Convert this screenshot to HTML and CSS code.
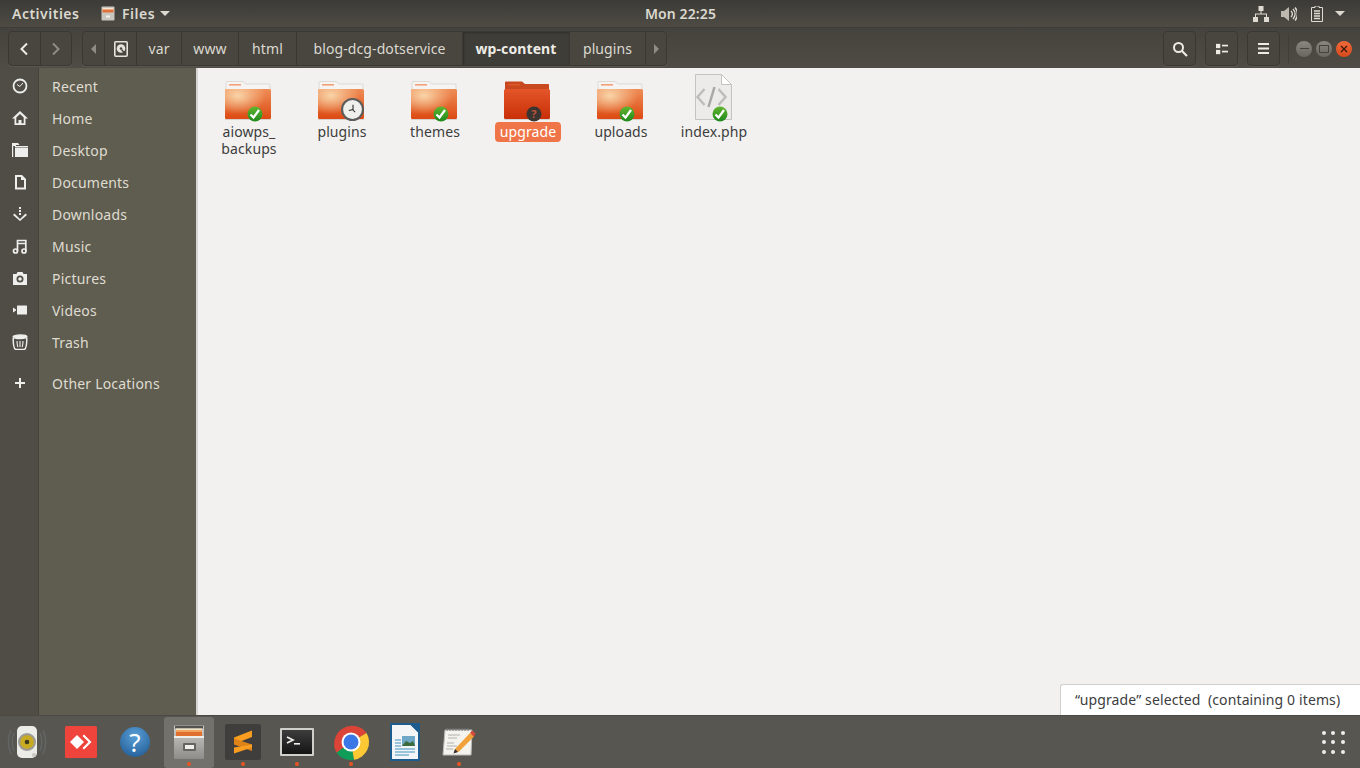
FILE: index.html
```html
<!DOCTYPE html>
<html lang="en">
<head>
<meta charset="utf-8">
<title>Files</title>
<link rel="stylesheet" href="styles.css">
</head>
<body>
<svg class="defs" aria-hidden="true">
  <defs>
    <linearGradient id="fbody" x1="0" y1="0" x2="0" y2="1"><stop offset="0" stop-color="#ef8d57"/><stop offset="1" stop-color="#dc4a12"/></linearGradient>
    <radialGradient id="fglow" cx=".28" cy=".22" r=".62"><stop offset="0" stop-color="#fad9ae" stop-opacity=".95"/><stop offset="1" stop-color="#f9d3a4" stop-opacity="0"/></radialGradient>
    <linearGradient id="fred" x1="0" y1="0" x2="0" y2="1"><stop offset="0" stop-color="#e4562a"/><stop offset="1" stop-color="#c92f08"/></linearGradient>
    <linearGradient id="green" x1="0" y1="0" x2="0" y2="1"><stop offset="0" stop-color="#63b52f"/><stop offset="1" stop-color="#1e8a1e"/></linearGradient>
    <linearGradient id="cab" x1="0" y1="0" x2="0" y2="1"><stop offset="0" stop-color="#d2d0cc"/><stop offset="1" stop-color="#8e8c88"/></linearGradient>
    <linearGradient id="term" x1="0" y1="0" x2="0" y2="1"><stop offset="0" stop-color="#3d3d3d"/><stop offset="1" stop-color="#141414"/></linearGradient>
    <radialGradient id="help" cx=".5" cy=".3" r=".8"><stop offset="0" stop-color="#5b9fd6"/><stop offset="1" stop-color="#1f5a94"/></radialGradient>
    <symbol id="folder" viewBox="0 0 48 48">
      <path d="M2 8.500a1 1 0 0 1 1-1h16l3 2.500h23a1 1 0 0 1 1 1v6H2z" fill="#f6f4f2" stroke="#cfcac5" stroke-width=".6"/>
      <rect x="5" y="10" width="12" height="1.600" fill="#f0a176"/>
      <rect x="1" y="15" width="46" height="30" rx="1.500" fill="url(#fbody)"/>
      <rect x="1" y="15" width="46" height="30" rx="1.500" fill="url(#fglow)"/>
      <rect x="1" y="45" width="46" height="1" fill="#000" opacity=".12"/>
    </symbol>
    <symbol id="check" viewBox="0 0 16 16">
      <circle cx="8" cy="8" r="7.500" fill="url(#green)"/>
      <path d="M3.500 8.500l3 3 5.500-7.500" fill="none" stroke="#fff" stroke-width="2.200"/>
    </symbol>
  </defs>
</svg>

<header class="topbar">
  <span class="top-activities">Activities</span>
  <div class="top-app">
    <svg class="top-files" viewBox="0 0 14 15"><rect x=".5" y=".5" width="13" height="14" rx="1" fill="#c9c6c0"/><rect x="1.500" y="2" width="11" height="4.500" fill="#e2703a"/><rect x="1.500" y="2" width="11" height="1.500" fill="#f5e6d0"/><rect x="5" y="9.500" width="4" height="2" fill="#f4f2ee"/></svg>
    <span>Files</span>
    <i class="caret"></i>
  </div>
  <time class="top-clock">Mon 22:25</time>
  <div class="top-tray">
    <svg class="tray-net" viewBox="0 0 16 16" fill="#dfdbd2"><rect x="5.500" y="0" width="5" height="5"/><rect x="0" y="11" width="5" height="5"/><rect x="11" y="11" width="5" height="5"/><path d="M7.500 5h1v2.500h5.500v3.500h-1V8.500H3V11H2V7.500h5.500z"/></svg>
    <svg class="tray-sound" viewBox="0 0 16 16" fill="none" stroke="#dfdbd2"><path d="M0 5h3l5-4v14l-5-4H0z" fill="#bdb9b0" stroke="none"/><path d="M10 5a4 4 0 0 1 0 6M12 3a7 7 0 0 1 0 10M14 1.500a10 10 0 0 1 0 13" stroke-width="1.300"/></svg>
    <svg class="tray-batt" viewBox="0 0 12 16"><path d="M4 0h4v1.500h3.500v14H.5v-14H4z" fill="none" stroke="#dfdbd2"/><path d="M3 5h6M3 7.500h6M3 10h6M3 12.500h6" stroke="#dfdbd2" stroke-width="1.300"/></svg>
    <i class="caret"></i>
  </div>
</header>

<nav class="headerbar">
  <div class="btn-group nav-group">
    <button class="hb-btn nav-btn"><svg viewBox="0 0 10 14" class="chev"><path d="M8 1.500L2.500 7 8 12.500" fill="none" stroke="#ecebe6" stroke-width="2"/></svg></button>
    <button class="hb-btn nav-btn"><svg viewBox="0 0 10 14" class="chev"><path d="M2 1.500L7.500 7 2 12.500" fill="none" stroke="#8f8c84" stroke-width="2"/></svg></button>
  </div>
  <div class="btn-group path-group">
    <button class="seg seg-a"><i class="tri tri-left"></i></button>
    <button class="seg seg-b"><svg viewBox="0 0 14 16" class="disk"><rect x=".8" y=".8" width="12.400" height="14.400" rx="1" fill="none" stroke="#e4e2dc" stroke-width="1.600"/><circle cx="7" cy="7.500" r="4.300" fill="#e4e2dc"/><circle cx="7" cy="7.500" r="1.200" fill="#47453f"/><path d="M7.500 8.500l3 3.500" stroke="#47453f" stroke-width="1.400"/></svg></button>
    <button class="seg seg-c">var</button>
    <button class="seg seg-d">www</button>
    <button class="seg seg-e">html</button>
    <button class="seg seg-f">blog-dcg-dotservice</button>
    <button class="seg seg-g seg-active">wp-content</button>
    <button class="seg seg-h">plugins</button>
    <button class="seg seg-i"><i class="tri tri-right"></i></button>
  </div>
  <div class="hb-right">
    <button class="hb-btn tool-btn"><svg viewBox="0 0 16 16" class="tool"><circle cx="6.500" cy="6.500" r="4.500" fill="none" stroke="#ecebe6" stroke-width="2"/><path d="M10 10l5 5" stroke="#ecebe6" stroke-width="2.200"/></svg></button>
    <button class="hb-btn tool-btn"><svg viewBox="0 0 14 12" class="tool-small" fill="#ecebe6"><rect x="0" y="0" width="5" height="5"/><rect x="0" y="7" width="5" height="5"/><rect x="7" y="1" width="7" height="2"/><rect x="7" y="8" width="7" height="2"/></svg></button>
    <button class="hb-btn tool-btn"><svg viewBox="0 0 12 12" class="tool-small" fill="#ecebe6"><rect y="0" width="11" height="2"/><rect y="4.500" width="11" height="2"/><rect y="9" width="11" height="2"/></svg></button>
    <span class="hb-sep"></span>
    <div class="wm">
      <span class="wm-btn"><i class="wm-min"></i></span>
      <span class="wm-btn"><i class="wm-max"></i></span>
      <span class="wm-btn wm-close"><svg viewBox="0 0 8 8" class="wm-x"><path d="M1 1l6 6M7 1l-6 6" stroke="#3b1a0c" stroke-width="1.300"/></svg></span>
    </div>
  </div>
</nav>

<main class="main">
  <aside class="sidebar">
    <div class="side-row"><span class="side-ic"><svg viewBox="0 0 16 16"><circle cx="8" cy="8" r="6.500" fill="none" stroke="#eeeeec" stroke-width="1.800"/><path d="M5 6.500l2.800 2L11 5" fill="none" stroke="#eeeeec"/></svg></span><span class="side-tx">Recent</span></div>
    <div class="side-row"><span class="side-ic"><svg viewBox="0 0 16 16" fill="#eeeeec"><path d="M8 1L0 8.500h2.500V15h11V8.500H16zM4.300 7.500L8 4l3.700 3.500v5.800H9.500V10h-3v3.300H4.300z" fill-rule="evenodd"/></svg></span><span class="side-tx">Home</span></div>
    <div class="side-row"><span class="side-ic"><svg viewBox="0 0 16 16" fill="#eeeeec"><path d="M0 1h6l1.500 2H4v1H1.200v11H0z"/><path d="M3 5.500h13V15H3zM3 4h13v1H3z"/></svg></span><span class="side-tx">Desktop</span></div>
    <div class="side-row"><span class="side-ic"><svg viewBox="0 0 16 16" fill="#eeeeec"><path d="M3 1h7l4 4v10.500H3zM5 3v10.500h7V6H9V3z" fill-rule="evenodd"/></svg></span><span class="side-tx">Documents</span></div>
    <div class="side-row"><span class="side-ic"><svg viewBox="0 0 16 16" fill="#eeeeec"><rect x="7" y="1" width="2" height="2"/><rect x="7" y="4" width="2" height="2"/><rect x="7" y="7" width="2" height="2"/><path d="M2.500 8.500L8 14l5.500-5.500L15 10l-7 6-7-6z" transform="translate(0 -1)"/></svg></span><span class="side-tx">Downloads</span></div>
    <div class="side-row"><span class="side-ic"><svg viewBox="0 0 16 16" fill="none" stroke="#eeeeec" stroke-width="1.700"><circle cx="3.500" cy="13" r="2"/><circle cx="12" cy="13" r="2"/><path d="M5.500 13V2.500h8.300V13M5.500 5.500h8.300"/></svg></span><span class="side-tx">Music</span></div>
    <div class="side-row"><span class="side-ic"><svg viewBox="0 0 16 16"><path d="M1 4h3.500l1-2h5l1 2H15v11H1z" fill="#eeeeec"/><circle cx="8" cy="9" r="3.500" fill="#4f4d46"/><circle cx="8" cy="9" r="1.800" fill="#eeeeec"/></svg></span><span class="side-tx">Pictures</span></div>
    <div class="side-row"><span class="side-ic"><svg viewBox="0 0 16 16" fill="#eeeeec"><rect x="5" y="3.500" width="10" height="9" rx=".5"/><path d="M1 5.500l3 2v1l-3 2z"/></svg></span><span class="side-tx">Videos</span></div>
    <div class="side-row"><span class="side-ic"><svg viewBox="0 0 16 16" fill="none" stroke="#eeeeec" stroke-width="1.300"><ellipse cx="8" cy="2.800" rx="7" ry="1.800" fill="#eeeeec"/><path d="M1.200 4c0 6 .3 11.500 2.800 11.500h8c2.500 0 2.800-5.500 2.800-11.500" stroke-width="1.500"/><path d="M5 7c0 2 .3 4 .8 6M8 7v6M11 7c0 2-.3 4-.8 6" stroke-width="1.100"/></svg></span><span class="side-tx">Trash</span></div>
    <div class="side-row side-other"><span class="side-ic"><svg viewBox="0 0 16 16" fill="#eeeeec"><rect x="7" y="3" width="2" height="10"/><rect x="3" y="7" width="10" height="2"/></svg></span><span class="side-tx">Other Locations</span></div>
  </aside>

  <section class="content">
    <div class="grid">
      <article class="item">
        <span class="thumb"><svg class="thumb-svg"><use href="#folder"/></svg><svg class="badge"><use href="#check"/></svg></span>
        <span class="label">aiowps_<br>backups</span>
      </article>
      <article class="item">
        <span class="thumb"><svg class="thumb-svg"><use href="#folder"/></svg>
          <svg class="badge badge-clock" viewBox="0 0 22 22"><circle cx="11" cy="11" r="10" fill="#efefec" stroke="#5c5c5c" stroke-width="2"/><path d="M11.500 6.500v4.500l-4 1" fill="none" stroke="#333" stroke-width="1.100"/><path d="M11 11l2.500 2.500" stroke="#333"/></svg></span>
        <span class="label">plugins</span>
      </article>
      <article class="item">
        <span class="thumb"><svg class="thumb-svg"><use href="#folder"/></svg><svg class="badge"><use href="#check"/></svg></span>
        <span class="label">themes</span>
      </article>
      <article class="item">
        <span class="thumb"><svg class="thumb-svg" viewBox="0 0 48 48"><path d="M2 8.500a1 1 0 0 1 1-1h16l3 2.500h23a1 1 0 0 1 1 1v6H2z" fill="#c8481f"/><rect x="5" y="10" width="12" height="1.600" fill="#e0572c"/><rect x="1" y="15" width="46" height="30" rx="1.500" fill="url(#fred)"/><rect x="1" y="45" width="46" height="1" fill="#000" opacity=".12"/></svg>
          <svg class="badge" viewBox="0 0 16 16"><circle cx="8" cy="8" r="7.500" fill="#3b3532"/><text x="8" y="12" class="badge-q">?</text></svg></span>
        <span class="label label-sel">upgrade</span>
      </article>
      <article class="item">
        <span class="thumb"><svg class="thumb-svg"><use href="#folder"/></svg><svg class="badge"><use href="#check"/></svg></span>
        <span class="label">uploads</span>
      </article>
      <article class="item">
        <span class="thumb"><svg class="thumb-svg" viewBox="0 0 48 48"><path d="M6.500 .5h26l10 10v35h-36z" fill="#ecebe9" stroke="#c4c3c0"/><path d="M32.500 .5v10h10z" fill="#fff" stroke="#c4c3c0"/><path d="M15.500 15l-7 8 7 8M29.500 15l7 8-7 8" fill="none" stroke="#bebdba" stroke-width="2.500"/><path d="M25.500 13l-6 20" stroke="#a9a8a5" stroke-width="2.500"/></svg><svg class="badge"><use href="#check"/></svg></span>
        <span class="label">index.php</span>
      </article>
    </div>
    <div class="status">“upgrade” selected&nbsp; (containing 0 items)</div>
  </section>
</main>

<footer class="dock">
  <div class="slot">
    <svg class="app app-speaker" viewBox="0 0 36 40"><path d="M5 11a24 24 0 0 0 0 18M2 8a30 30 0 0 0 0 24M31 11a24 24 0 0 1 0 18M34 8a30 30 0 0 1 0 24" stroke="#7d8b99" stroke-width="1.500" fill="none" opacity=".3"/><rect x="8" y="4" width="20" height="32" rx="5" fill="#ecece8"/><circle cx="18" cy="20" r="9" fill="#9c9a92"/><circle cx="18" cy="20" r="6.800" fill="#c9ab22"/><circle cx="18" cy="20" r="2.300" fill="#3d3a20"/><circle cx="25" cy="33" r="2" fill="#c8c8c4"/></svg>
  </div>
  <div class="slot">
    <svg class="app app-any" viewBox="0 0 32 32"><rect width="32" height="32" rx="1.500" fill="#ef443b"/><path d="M5 16l7-7 7 7-7 7z" fill="#fff"/><path d="M19 8.500l7.500 7.500-7.500 7.500-1.500-1.500 6-6-6-6z" fill="#fff"/></svg>
  </div>
  <div class="slot">
    <svg class="app app-help" viewBox="0 0 30 30"><circle cx="15" cy="15" r="15" fill="url(#help)"/><text x="15" y="25" class="help-q">?</text></svg>
  </div>
  <div class="slot slot-active">
    <svg class="app app-cab" viewBox="0 0 32 36"><rect x="1" y="1" width="30" height="34" rx="1.500" fill="url(#cab)"/><rect x="2" y="1.500" width="28" height="3" fill="#55534f"/><rect x="3" y="4.500" width="26" height="1.500" fill="#f5e3c8"/><rect x="3" y="6" width="26" height="2" fill="#f0a45e"/><rect x="3" y="8" width="26" height="4" fill="#e0702f"/><rect x="1" y="12" width="30" height="2" fill="#eeedea"/><rect x="10" y="19" width="13" height="8" rx="1" fill="#66645f"/><rect x="12" y="21" width="9" height="4" fill="#f0efed"/></svg>
    <i class="run-dot"></i>
  </div>
  <div class="slot">
    <svg class="app app-sub" viewBox="0 0 36 36"><rect width="36" height="36" rx="2" fill="#3f3e3c"/><path d="M9 13.500L27 6.500V13L9 20z" fill="#f89d1f"/><path d="M9 14.500L27 20.500V27L9 20.500z" fill="#dd8318"/><path d="M27 20.500V23.500L9 29.500V23.500z" fill="#f89d1f"/></svg>
    <i class="run-dot"></i>
  </div>
  <div class="slot">
    <svg class="app app-term" viewBox="0 0 34 28"><rect width="34" height="28" rx="1" fill="#cfcfcb"/><rect x="2" y="2" width="30" height="24" fill="url(#term)"/><path d="M7 9l6 3-6 3" fill="none" stroke="#f1f1ee" stroke-width="1.700"/><rect x="14" y="15" width="6" height="1.600" fill="#f1f1ee"/></svg>
    <i class="run-dot"></i>
  </div>
  <div class="slot">
    <svg class="app app-chrome" viewBox="0 0 36 36"><path d="M18 18L33.600 9A18 18 0 0 0 3.600 28.800z" fill="#db4437"/><path d="M18 18L3.600 28.800A18 18 0 0 0 21 35.800z" fill="#0f9d58"/><path d="M18 18L21 35.800A18 18 0 0 0 33.600 9z" fill="#fcc934"/><circle cx="18" cy="18" r="9.500" fill="#fff"/><circle cx="18" cy="18" r="7.500" fill="#3b78e7"/></svg>
    <i class="run-dot"></i>
  </div>
  <div class="slot">
    <svg class="app app-writer" viewBox="0 0 30 38"><path d="M1 1h20l8 8v28H1z" fill="#f3f5f6" stroke="#1c5c8e" stroke-width="2"/><path d="M19 0h11v11z" fill="#1c5c8e"/><rect x="12" y="13" width="13" height="10" fill="#6fa7c6"/><path d="M12 23l4-5 4 2 3-2 2 5z" fill="#3c6b3c"/><path d="M5 17h6M5 20h6M5 23h6M5 26h20M5 29h20M5 32h14" stroke="#7bb2d2" stroke-width="1.500"/></svg>
  </div>
  <div class="slot">
    <svg class="app app-note" viewBox="0 0 34 32"><path d="M3 4h27l-1 25H1z" fill="#f4f3ee" stroke="#bbb"/><path d="M5 2v3M8 2v3M11 2v3M14 2v3M17 2v3M20 2v3M23 2v3M26 2v3" stroke="#777"/><path d="M6 9h12M6 12h9M5 17h7M5 20h10M4 23h7" stroke="#b3b2ae"/><path d="M13 23l15-16 4 3.500-15 15-5 1.500z" fill="#f1a13a"/><path d="M28 7l2-2.500 3.500 3-1.500 3z" fill="#d9483b"/><path d="M13 23l-1.500 4.500 4.500-1.500z" fill="#333"/></svg>
    <i class="run-dot"></i>
  </div>
  <div class="slot slot-grid">
    <div class="apps-grid"><i></i><i></i><i></i><i></i><i></i><i></i><i></i><i></i><i></i></div>
  </div>
</footer>
</body>
</html>
```

FILE: styles.css
```css
* { box-sizing: border-box; }
html, body { margin: 0; height: 100%; overflow: hidden; }
body {
  display: flex;
  flex-direction: column;
  width: 1360px;
  height: 768px;
  font-family: "Noto Sans", "Open Sans", sans-serif;
  font-size: 14px;
  letter-spacing: .2px;
  color: #dfdbd2;
  background: #f2f1f0;
}
button { font: inherit; letter-spacing: inherit; color: inherit; background: none; border: 0; padding: 0; margin: 0; }
i { display: block; }
.defs { position: absolute; width: 0; height: 0; }

/* top bar */
.topbar {
  position: relative;
  flex: 0 0 27px;
  display: flex;
  align-items: center;
  background: linear-gradient(#3c3b37, #4d4b44);
  font-weight: 600;
  letter-spacing: .5px;
  color: #dcd9d0;
}
.top-activities { margin-left: 12px; width: 89px; }
.top-app { display: flex; align-items: center; }
.top-files { width: 14px; height: 15px; margin-right: 7px; }
.caret { width: 0; height: 0; border-left: 5px solid transparent; border-right: 5px solid transparent; border-top: 5px solid #dcd9d0; }
.top-app .caret { margin-left: 5px; }
.top-clock { position: absolute; left: 645px; top: 4px; line-height: 19px; letter-spacing: .1px; }
.top-tray { margin-left: auto; display: flex; align-items: center; padding-right: 15px; }
.tray-net, .tray-sound { width: 16px; height: 16px; }
.tray-net { margin-right: 12px; }
.tray-sound { margin-right: 14px; }
.tray-batt { width: 12px; height: 16px; margin-right: 12px; }

/* header bar */
.headerbar {
  flex: 0 0 41px;
  display: flex;
  align-items: center;
  padding: 1px 8px 0 8px;
  background: linear-gradient(#45433d, #4f4c45);
  border-top: 1px solid #3e3c37;
}
.btn-group {
  display: flex;
  height: 35px;
  border: 1px solid #3a3833;
  border-radius: 4px;
  background: #48463f;
  box-shadow: 0 1px 0 #5a574f;
}
.nav-group { width: 64px; }
.nav-btn { flex: 1; display: flex; align-items: center; justify-content: center; }
.nav-btn + .nav-btn { border-left: 1px solid #3a3833; }
.chev { width: 10px; height: 14px; }
.path-group { margin-left: 10px; width: 585px; letter-spacing: .1px; }
.seg {
  display: flex;
  align-items: center;
  justify-content: center;
  border-right: 1px solid #3a3833;
  color: #dcd9d0;
  white-space: nowrap;
}
.seg-a { width: 22px; }
.seg-b { width: 32px; }
.seg-c { width: 45px; }
.seg-d { width: 57px; }
.seg-e { width: 58px; }
.seg-f { width: 166px; }
.seg-g { width: 107px; }
.seg-h { width: 76px; }
.seg-i { flex: 1; border-right: 0; }
.seg-active { background: #3f3d38; font-weight: 700; color: #eeece6; box-shadow: inset 1px 1px 2px #2f2e2a; }
.tri { width: 0; height: 0; border-top: 5px solid transparent; border-bottom: 5px solid transparent; }
.tri-left { border-right: 5px solid #8f8c84; }
.tri-right { border-left: 5px solid #8f8c84; }
.disk { width: 14px; height: 16px; }
.hb-right { margin-left: auto; display: flex; align-items: center; }
.tool-btn {
  width: 33px;
  height: 35px;
  margin-left: 9px;
  display: flex;
  align-items: center;
  justify-content: center;
  border: 1px solid #3a3833;
  border-radius: 4px;
  background: #48463f;
  box-shadow: 0 1px 0 #5a574f;
}
.tool { width: 16px; height: 16px; }
.tool-small { width: 12px; height: 12px; }
.hb-sep { width: 1px; height: 29px; margin: 0 7px 0 8px; background: #403e39; }
.wm { display: flex; gap: 4px; }
.wm-btn {
  width: 16px;
  height: 16px;
  border-radius: 50%;
  background: linear-gradient(#8a877f, #68665f);
  display: flex;
  align-items: center;
  justify-content: center;
}
.wm-close { background: linear-gradient(#f0693a, #d7491a); }
.wm-min { width: 9px; height: 1px; background: #45433d; }
.wm-max { width: 10px; height: 8px; border: 1px solid #45433d; }
.wm-x { width: 8px; height: 8px; }

/* main */
.main { flex: 1; min-height: 0; display: flex; }
.sidebar {
  flex: 0 0 198px;
  padding-top: 2px;
  background: linear-gradient(90deg, #4f4d46 0, #4f4d46 38px, #45433d 38px, #45433d 39px, #5f5c50 39px);
  border-right: 2px solid #d6d5d3;
  color: #dfdcd0;
}
.side-row { height: 32px; display: flex; align-items: center; }
.side-other { margin-top: 9px; }
.side-ic { width: 52px; padding-left: 12px; display: flex; }
.side-ic svg { width: 16px; height: 16px; }
.content { position: relative; flex: 1; background: #f2f1f0; padding: 6px 0 0 4.500px; }
.grid { display: grid; grid-template-columns: repeat(6, 93px); align-items: start; }
.item { display: flex; flex-direction: column; align-items: center; }
.thumb { position: relative; width: 48px; height: 48px; margin-right: 3px; display: block; }
.thumb-svg { width: 48px; height: 48px; display: block; }
.badge { position: absolute; left: 23px; top: 32px; width: 16px; height: 16px; }
.badge-clock { left: 24px; top: 24px; width: 23px; height: 23px; }
.badge-q { fill: #b8573a; font-size: 11px; font-weight: 700; text-anchor: middle; }
.label { margin-top: 1px; line-height: 17px; color: #3d3d3d; text-align: center; letter-spacing: .1px; }
.label-sel { margin-top: 0; padding: 1px 5px 2px; border-radius: 4px; background: #ef7548; color: #fff; }
.status {
  position: absolute;
  right: 0;
  bottom: 0;
  width: 300px;
  height: 31px;
  padding: 0 0 2px 14px;
  display: flex;
  align-items: center;
  background: #fff;
  border: 1px solid #d0cfcc;
  border-width: 1px 0 0 1px;
  border-top-left-radius: 3px;
  color: #3d3d3d;
  letter-spacing: .12px;
}

/* dock */
.dock { flex: 0 0 53px; display: flex; background: #575650; border-top: 1px solid #4a4944; }
.slot { position: relative; width: 54px; display: flex; align-items: center; justify-content: center; }
.slot-active::before { content: ""; position: absolute; left: 2px; right: 2px; top: 1px; bottom: 0; border-radius: 3px; background: #72716b; }
.slot-grid { margin-left: auto; }
.app { position: relative; display: block; overflow: visible; }
.app-speaker { width: 36px; height: 40px; }
.app-any { width: 32px; height: 32px; }
.app-help { width: 30px; height: 30px; }
.app-cab { width: 32px; height: 36px; }
.app-sub { width: 36px; height: 36px; }
.app-term { width: 34px; height: 28px; }
.app-chrome { width: 36px; height: 36px; }
.app-writer { width: 30px; height: 38px; }
.app-note { width: 34px; height: 32px; }
.help-q { fill: #fff; font-size: 26px; text-anchor: middle; font-weight: 400; }
.run-dot { position: absolute; left: 25px; bottom: 2px; width: 4px; height: 4px; border-radius: 50%; background: #e95420; }
.apps-grid { display: grid; grid-template-columns: repeat(3, 4px); gap: 5.500px; }
.apps-grid i { width: 4px; height: 4px; border-radius: 50%; background: #eeeeec; }
```
